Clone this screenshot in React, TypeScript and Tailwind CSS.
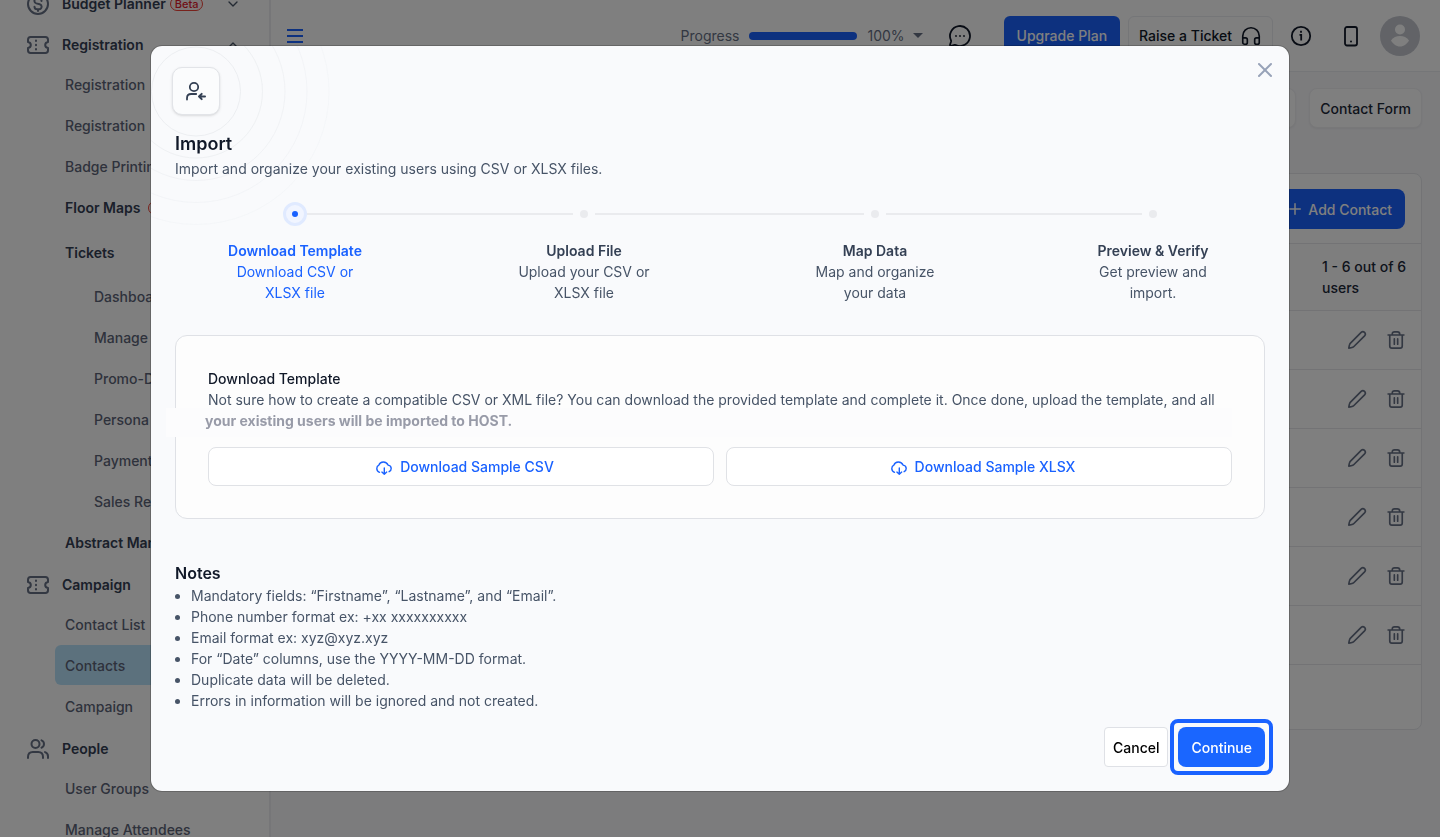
import React from 'react';
import { ChevronDown, ChevronUp, Headphones, MessageCircleMore, Plus, X } from 'lucide-react';

type NavLevel = 'root' | 'group' | 'tickets' | 'child' | 'leaf';

interface NavItem {
  label: string;
  level: NavLevel;
  icon?: React.ReactNode;
  chevron?: 'up' | 'down';
  beta?: boolean;
  active?: boolean;
}

interface IconProps {
  className?: string;
}

const TicketIcon: React.FC<IconProps> = ({ className }) => (
  <svg className={className} viewBox="0 0 24 24" fill="none" stroke="currentColor" strokeWidth="2" strokeLinecap="round" strokeLinejoin="round">
    <path d="M2 9V6.800C2 4.600 2.600 4 4.600 4h14.800c2 0 2.600.6 2.600 2.800V9c-1.700.3-2.800 1.500-2.800 3s1.100 2.700 2.800 3v2.200c0 2.200-.6 2.800-2.600 2.800H4.600C2.600 20 2 19.400 2 17.200V15c1.700-.3 2.800-1.500 2.800-3S3.700 9.300 2 9z" />
    <path d="M10 7.500v.6M10 11.700v.6M10 15.900v.6" />
  </svg>
);

const PeopleIcon: React.FC<IconProps> = ({ className }) => (
  <svg className={className} viewBox="0 0 24 24" fill="none" stroke="currentColor" strokeWidth="2" strokeLinecap="round" strokeLinejoin="round">
    <path d="M22 21v-1.700c0-2-1.200-3.600-3-4.200M15.500 3.300a4 4 0 0 1 0 7.400M17 21v-1c0-3-1.800-5-4.800-5H6.800C3.800 15 2 17 2 20v1" />
    <circle cx="9.500" cy="7" r="4" />
  </svg>
);

const DollarIcon: React.FC<IconProps> = ({ className }) => (
  <svg className={className} viewBox="0 0 24 24" fill="none" stroke="currentColor" strokeWidth="2" strokeLinecap="round" strokeLinejoin="round">
    <circle cx="12" cy="12" r="10" />
    <path d="M8.500 14.700a2.700 2.700 0 0 0 2.700 2.600h1.900a2.600 2.600 0 0 0 .6-5.100l-3.400-.8a2.600 2.600 0 0 1 .6-5.100h1.900a2.700 2.700 0 0 1 2.700 2.600M12 4.800v1.500m0 11v1.600" />
  </svg>
);

const PencilIcon: React.FC<IconProps> = ({ className }) => (
  <svg className={className} viewBox="0 0 24 24" fill="none" stroke="currentColor" strokeWidth="2" strokeLinejoin="round">
    <path d="M2.200 21.800c.2-1.600.5-3.300 1.100-4.700.3-.7.7-1.200 1.200-1.700L17 2.900a2.900 2.900 0 0 1 4.100 4.100L8.600 19.500c-.5.5-1 .9-1.700 1.200-1.400.6-3.100.9-4.700 1.100z" />
  </svg>
);

const TrashIcon: React.FC<IconProps> = ({ className }) => (
  <svg className={className} viewBox="0 0 24 24" fill="none" stroke="currentColor" strokeWidth="2" strokeLinecap="round" strokeLinejoin="round">
    <path d="M2.500 6h19M4.500 6v13.200c0 1.700.8 2.600 2.500 2.600h10c1.700 0 2.500-.9 2.500-2.600V6M7.500 6V5c0-1.800.9-2.800 2.700-2.800h3.600c1.800 0 2.700 1 2.700 2.800v1M10 10.500v6.500M14 10.500v6.500" />
  </svg>
);

const InfoIcon: React.FC<IconProps> = ({ className }) => (
  <svg className={className} viewBox="0 0 24 24" fill="none" stroke="currentColor" strokeWidth="1.8">
    <circle cx="12" cy="12" r="9.2" />
    <path d="M10.500 10.800h1.700v5.700M12 6.800v1.900" />
  </svg>
);

const PhoneIcon: React.FC<IconProps> = ({ className }) => (
  <svg className={className} viewBox="0 0 24 24" fill="none" stroke="currentColor" strokeWidth="1.8">
    <rect x="6" y="3" width="12" height="18.5" rx="2" />
    <circle cx="12" cy="17.5" r="1" fill="currentColor" stroke="none" />
  </svg>
);

const UserImportIcon: React.FC<IconProps> = ({ className }) => (
  <svg className={className} viewBox="0 0 24 24" fill="none" stroke="currentColor" strokeWidth="1.8" strokeLinecap="round" strokeLinejoin="round">
    <circle cx="10" cy="8" r="4.2" />
    <path d="M3 20.500v-1.300c0-2.700 1.600-4.200 4.200-4.200h5" />
    <path d="M21 17.500h-6M17.700 14.900L15 17.500l2.700 2.600" strokeWidth="2" />
  </svg>
);

const CloudDownloadIcon: React.FC<IconProps> = ({ className }) => (
  <svg className={className} viewBox="0 0 16 16" fill="none" stroke="currentColor" strokeWidth="1.4" strokeLinecap="round" strokeLinejoin="round">
    <path d="M3.500 13.300C1.700 12.600.8 11.200.8 9.500c0-1.600.8-2.800 2.100-3.400C3.500 4.200 5.200 3 7.300 3c2.200 0 4 1.200 4.700 3.100 2 .2 3.200 1.500 3.200 3.300 0 1.500-.8 2.700-2.100 3.300" />
    <path d="M8.300 9v6.200M5.900 13.100l2.400 2.200 2.400-2.200" />
  </svg>
);

const navItems: NavItem[] = [
  { label: 'Budget Planner', level: 'root', icon: <DollarIcon className="size-6" />, chevron: 'down', beta: true },
  { label: 'Registration', level: 'root', icon: <TicketIcon className="size-6" />, chevron: 'up' },
  { label: 'Registration', level: 'child' },
  { label: 'Registration', level: 'child' },
  { label: 'Badge Printing', level: 'child' },
  { label: 'Floor Maps', level: 'group', beta: true },
  { label: 'Tickets', level: 'tickets' },
  { label: 'Dashboard', level: 'leaf' },
  { label: 'Manage', level: 'leaf' },
  { label: 'Promo-D', level: 'leaf' },
  { label: 'Persona', level: 'leaf' },
  { label: 'Payment', level: 'leaf' },
  { label: 'Sales Re', level: 'leaf' },
  { label: 'Abstract Man', level: 'group' },
  { label: 'Campaign', level: 'root', icon: <TicketIcon className="size-6" /> },
  { label: 'Contact List', level: 'child' },
  { label: 'Contacts', level: 'child', active: true },
  { label: 'Campaign', level: 'child' },
  { label: 'People', level: 'root', icon: <PeopleIcon className="size-6" /> },
  { label: 'User Groups', level: 'child' },
  { label: 'Manage Attendees', level: 'child' },
];

const levelClasses: Record<NavLevel, string> = {
  root: 'h-[39px] mt-[2px] ml-[26px] mr-7 gap-3 font-semibold text-[#344054]',
  group: 'h-[41px] ml-[55px] mr-4 pl-[10px] gap-2 font-semibold text-[#344054]',
  tickets: 'h-12 ml-[55px] mr-4 pl-[10px] font-semibold text-[#344054]',
  child: 'h-10 mb-px ml-[55px] mr-4 pl-[10px] rounded-md font-medium text-[#5d6478]',
  leaf: 'h-[41px] ml-[84px] mr-4 pl-[10px] font-medium text-[#5d6478]',
};

const Sidebar: React.FC = () => (
  <nav className="w-[271px] shrink-0 border-r-2 border-[#ececf0] bg-white">
    <ul className="-mt-[18px]">
      {navItems.map((item, i) => (
        <li key={i} className="flow-root">
          <a href="#" className={`flex items-center ${levelClasses[item.level]} ${item.active ? 'bg-[#b9e3fb]' : ''}`}>
            {item.icon && <span className="text-[#667085]">{item.icon}</span>}
            <span className="flex items-center gap-1 whitespace-nowrap">
              {item.label}
              {item.beta && (
                <span className={`rounded-full border border-[#f04438] bg-[#fef3f2] px-1 text-[11px] leading-3 font-medium text-[#e11d2e] ${item.level === 'group' ? 'ml-1' : ''}`}>Beta</span>
              )}
            </span>
            {item.chevron === 'down' && <ChevronDown className="ml-auto size-4 text-[#475467]" />}
            {item.chevron === 'up' && <ChevronUp className="ml-auto size-4 text-[#475467]" />}
          </a>
        </li>
      ))}
    </ul>
  </nav>
);

const Header: React.FC = () => (
  <header className="flex h-[72px] items-center border-b border-[#eaecf0] bg-white pr-5 pl-4 text-[#101828]">
    <button type="button" aria-label="Toggle menu" className="flex w-4 flex-col gap-1">
      <span className="h-[2px] bg-[#1a62ff]" />
      <span className="h-[2px] bg-[#1a62ff]" />
      <span className="h-[2px] bg-[#1a62ff]" />
    </button>
    <div className="ml-auto flex items-center text-[#667085]">
      <span>Progress</span>
      <span className="mx-[10px] h-2 w-27 rounded-full bg-[#1a62ff]" />
      <span>100%</span>
      <svg className="ml-2 h-[5px] w-[10px]" viewBox="0 0 10 5" fill="currentColor">
        <path d="M0 0h10L5 5z" />
      </svg>
    </div>
    <MessageCircleMore className="ml-[25px] size-6" strokeWidth={1.8} />
    <button type="button" className="ml-8 h-10 rounded-md bg-[#1a62ff] px-[13px] font-medium text-white">Upgrade Plan</button>
    <button type="button" className="ml-2 flex h-10 items-center gap-2 rounded-md border border-[#eaecf0] px-[10px] font-medium">
      Raise a Ticket
      <Headphones className="size-[22px]" strokeWidth={1.8} />
    </button>
    <InfoIcon className="ml-4 size-6" />
    <PhoneIcon className="ml-[26px] size-6" />
    <svg className="ml-[17px] size-10" viewBox="0 0 40 40">
      <circle cx="20" cy="20" r="20" fill="#c4c7cf" />
      <circle cx="20" cy="13.5" r="5" fill="#fff" />
      <path d="M11 24.500c2-3.300 5.500-4.500 9-4.500s7 1.200 9 4.500c-1.800 3.300-5.200 6-9 6s-7.200-2.700-9-6z" fill="#fff" />
    </svg>
  </header>
);

const ContactsPage: React.FC = () => (
  <main className="flex-1 bg-[#f8f8fb] px-[18px] pt-4">
    <div className="flex justify-end gap-[13px]">
      <button type="button" aria-label="More" className="h-10 w-28 rounded-lg border border-[#f0f0f3] bg-white shadow-xs" />
      <button type="button" className="h-10 rounded-lg border border-[#f0f0f3] bg-white px-[10px] font-medium text-[#1d2939] shadow-xs">Contact Form</button>
    </div>
    <section className="mt-[45px] rounded-lg border border-[#e6e7eb] bg-white pb-16">
      <div className="flex justify-end px-4 pt-[15px] pb-[14px]">
        <button type="button" className="flex h-10 items-center gap-1 rounded-lg bg-[#1a62ff] px-[13px] font-medium text-white">
          <Plus className="size-[18px]" />
          Add Contact
        </button>
      </div>
      <table className="w-full">
        <thead>
          <tr className="h-[67px] border-y border-[#e6e7eb] bg-[#fcfcfd] text-left text-[#1d2939]">
            <td />
            <th scope="col" className="w-[99px] pr-2 font-medium">1 - 6 out of 6 users</th>
          </tr>
        </thead>
        <tbody>
          {[1, 2, 3, 4, 5, 6].map((row) => (
            <tr key={row} className="h-[59px] border-b border-[#e6e7eb] text-[#667085]">
              <td />
              <td>
                <div className="flex justify-end gap-[19px] pr-[15px]">
                  <button type="button" aria-label="Edit contact"><PencilIcon className="size-5" /></button>
                  <button type="button" aria-label="Delete contact"><TrashIcon className="size-5" /></button>
                </div>
              </td>
            </tr>
          ))}
        </tbody>
      </table>
    </section>
  </main>
);

const steps = [
  { title: 'Download Template', text: 'Download CSV or XLSX file' },
  { title: 'Upload File', text: 'Upload your CSV or XLSX file' },
  { title: 'Map Data', text: 'Map and organize your data' },
  { title: 'Preview & Verify', text: 'Get preview and import.' },
];

const Stepper: React.FC = () => (
  <ol className="-mx-6 mt-[23px] grid grid-cols-[288fr_290fr_292fr_264fr] pr-1">
    {steps.map((step, i) => {
      const current = i === 0;
      return (
        <li key={step.title} className={`text-center ${current ? 'text-[#1a62ff]' : 'text-[#475467]'}`}>
          <div className="flex h-6 items-center">
            <span className={`h-[2px] flex-1 ${current ? '' : 'bg-[#eaebee]'}`} />
            {current ? (
              <span className="flex size-6 items-center justify-center rounded-full border-3 border-[#e0eaff] bg-[#f1f5ff]">
                <span className="size-[6px] rounded-full bg-[#1a62ff]" />
              </span>
            ) : (
              <span className="mx-[7px] size-2 rounded-full bg-[#eaebee]" />
            )}
            <span className={`h-[2px] flex-1 ${i === steps.length - 1 ? '' : 'bg-[#eaebee]'}`} />
          </div>
          <h3 className={`mt-[14px] font-semibold ${current ? '' : 'text-[#344054]'}`}>{step.title}</h3>
          <p className="mx-auto w-[134px]">{step.text}</p>
        </li>
      );
    })}
  </ol>
);

const notes = [
  'Mandatory fields: “Firstname”, “Lastname”, and “Email”.',
  'Phone number format ex: +xx xxxxxxxxxx',
  'Email format ex: xyz@xyz.xyz',
  'For “Date” columns, use the YYYY-MM-DD format.',
  'Duplicate data will be deleted.',
  'Errors in information will be ignored and not created.',
];

const Rings: React.FC = () => (
  <svg className="pointer-events-none absolute top-0 left-0 size-[200px]" viewBox="0 0 200 200" fill="none" stroke="#eceef1">
    <circle cx="45" cy="45.5" r="44.5" />
    <circle cx="45" cy="45.5" r="66.5" opacity="0.85" />
    <circle cx="45" cy="45.5" r="89" opacity="0.65" />
    <circle cx="45" cy="45.5" r="111" opacity="0.45" />
    <circle cx="45" cy="45.5" r="133" opacity="0.3" />
  </svg>
);

const ImportModal: React.FC = () => (
  <div role="dialog" aria-modal="true" aria-labelledby="import-title" className="relative w-full max-w-[1140px] overflow-hidden rounded-xl border border-black/20 bg-[#f9fafc] bg-clip-padding px-6 pt-[21px] pb-6">
    <Rings />
    <button type="button" aria-label="Close" className="absolute top-3 right-3 text-[#98a2b8]">
      <X className="size-6" />
    </button>

    <div className="relative -ml-[3px] flex size-12 items-center justify-center rounded-[10px] border border-[#e2e4e8] bg-[#fbfcfd] text-[#344054] shadow-sm">
      <UserImportIcon className="size-6" />
    </div>
    <h2 id="import-title" className="relative mt-[15px] text-lg leading-7 font-semibold text-[#101828]">Import</h2>
    <p className="relative">Import and organize your existing users using CSV or XLSX files.</p>

    <Stepper />

    <section className="mt-8 rounded-xl border border-[#dfe1e6] bg-[#fdfdfd] p-8">
      <h3 className="font-medium text-[#101828]">Download Template</h3>
      <p>Not sure how to create a compatible CSV or XML file? You can download the provided template and complete it. Once done, upload the template, and all</p>
      <p className="-mt-[2px] -ml-[42px] h-[29px] bg-[#fcfcfd] pt-[2px] pl-[39px] font-bold text-[#989ba8]">your existing users will be imported to HOST.</p>
      <div className="mt-[10px] grid grid-cols-2 gap-3 font-medium text-[#1a62ff]">
        <button type="button" className="flex h-[39px] items-center justify-center gap-2 rounded-lg border border-[#e0e2e6] bg-white pl-2">
          <CloudDownloadIcon className="size-4" />
          Download Sample CSV
        </button>
        <button type="button" className="flex h-[39px] items-center justify-center gap-2 rounded-lg border border-[#e0e2e6] bg-white pl-2">
          <CloudDownloadIcon className="size-4" />
          Download Sample XLSX
        </button>
      </div>
    </section>

    <h3 className="mt-[42px] text-base leading-6 font-semibold text-[#101828]">Notes</h3>
    <ul className="list-disc pl-4">
      {notes.map((note) => (
        <li key={note}>{note}</li>
      ))}
    </ul>

    <div className="mt-4 flex items-center justify-end gap-[10px]">
      <button type="button" className="h-10 rounded border border-[#dfe1e6] bg-white px-2 font-medium text-black">Cancel</button>
      <div className="-m-2 rounded-lg border-4 border-[#1a62ff] p-1">
        <button type="button" className="h-10 rounded-lg bg-[#1a66ff] px-[13px] font-medium text-white">Continue</button>
      </div>
    </div>
  </div>
);

const App: React.FC = () => (
  <div className="h-screen overflow-hidden font-[Inter,sans-serif] text-sm leading-[21px] text-[#475467]">
    <div className="flex h-full overflow-hidden">
      <Sidebar />
      <div className="flex min-w-0 flex-1 flex-col">
        <Header />
        <ContactsPage />
      </div>
    </div>
    <div className="fixed inset-0 flex items-center justify-center bg-black/50">
      <ImportModal />
    </div>
  </div>
);

export default App;
